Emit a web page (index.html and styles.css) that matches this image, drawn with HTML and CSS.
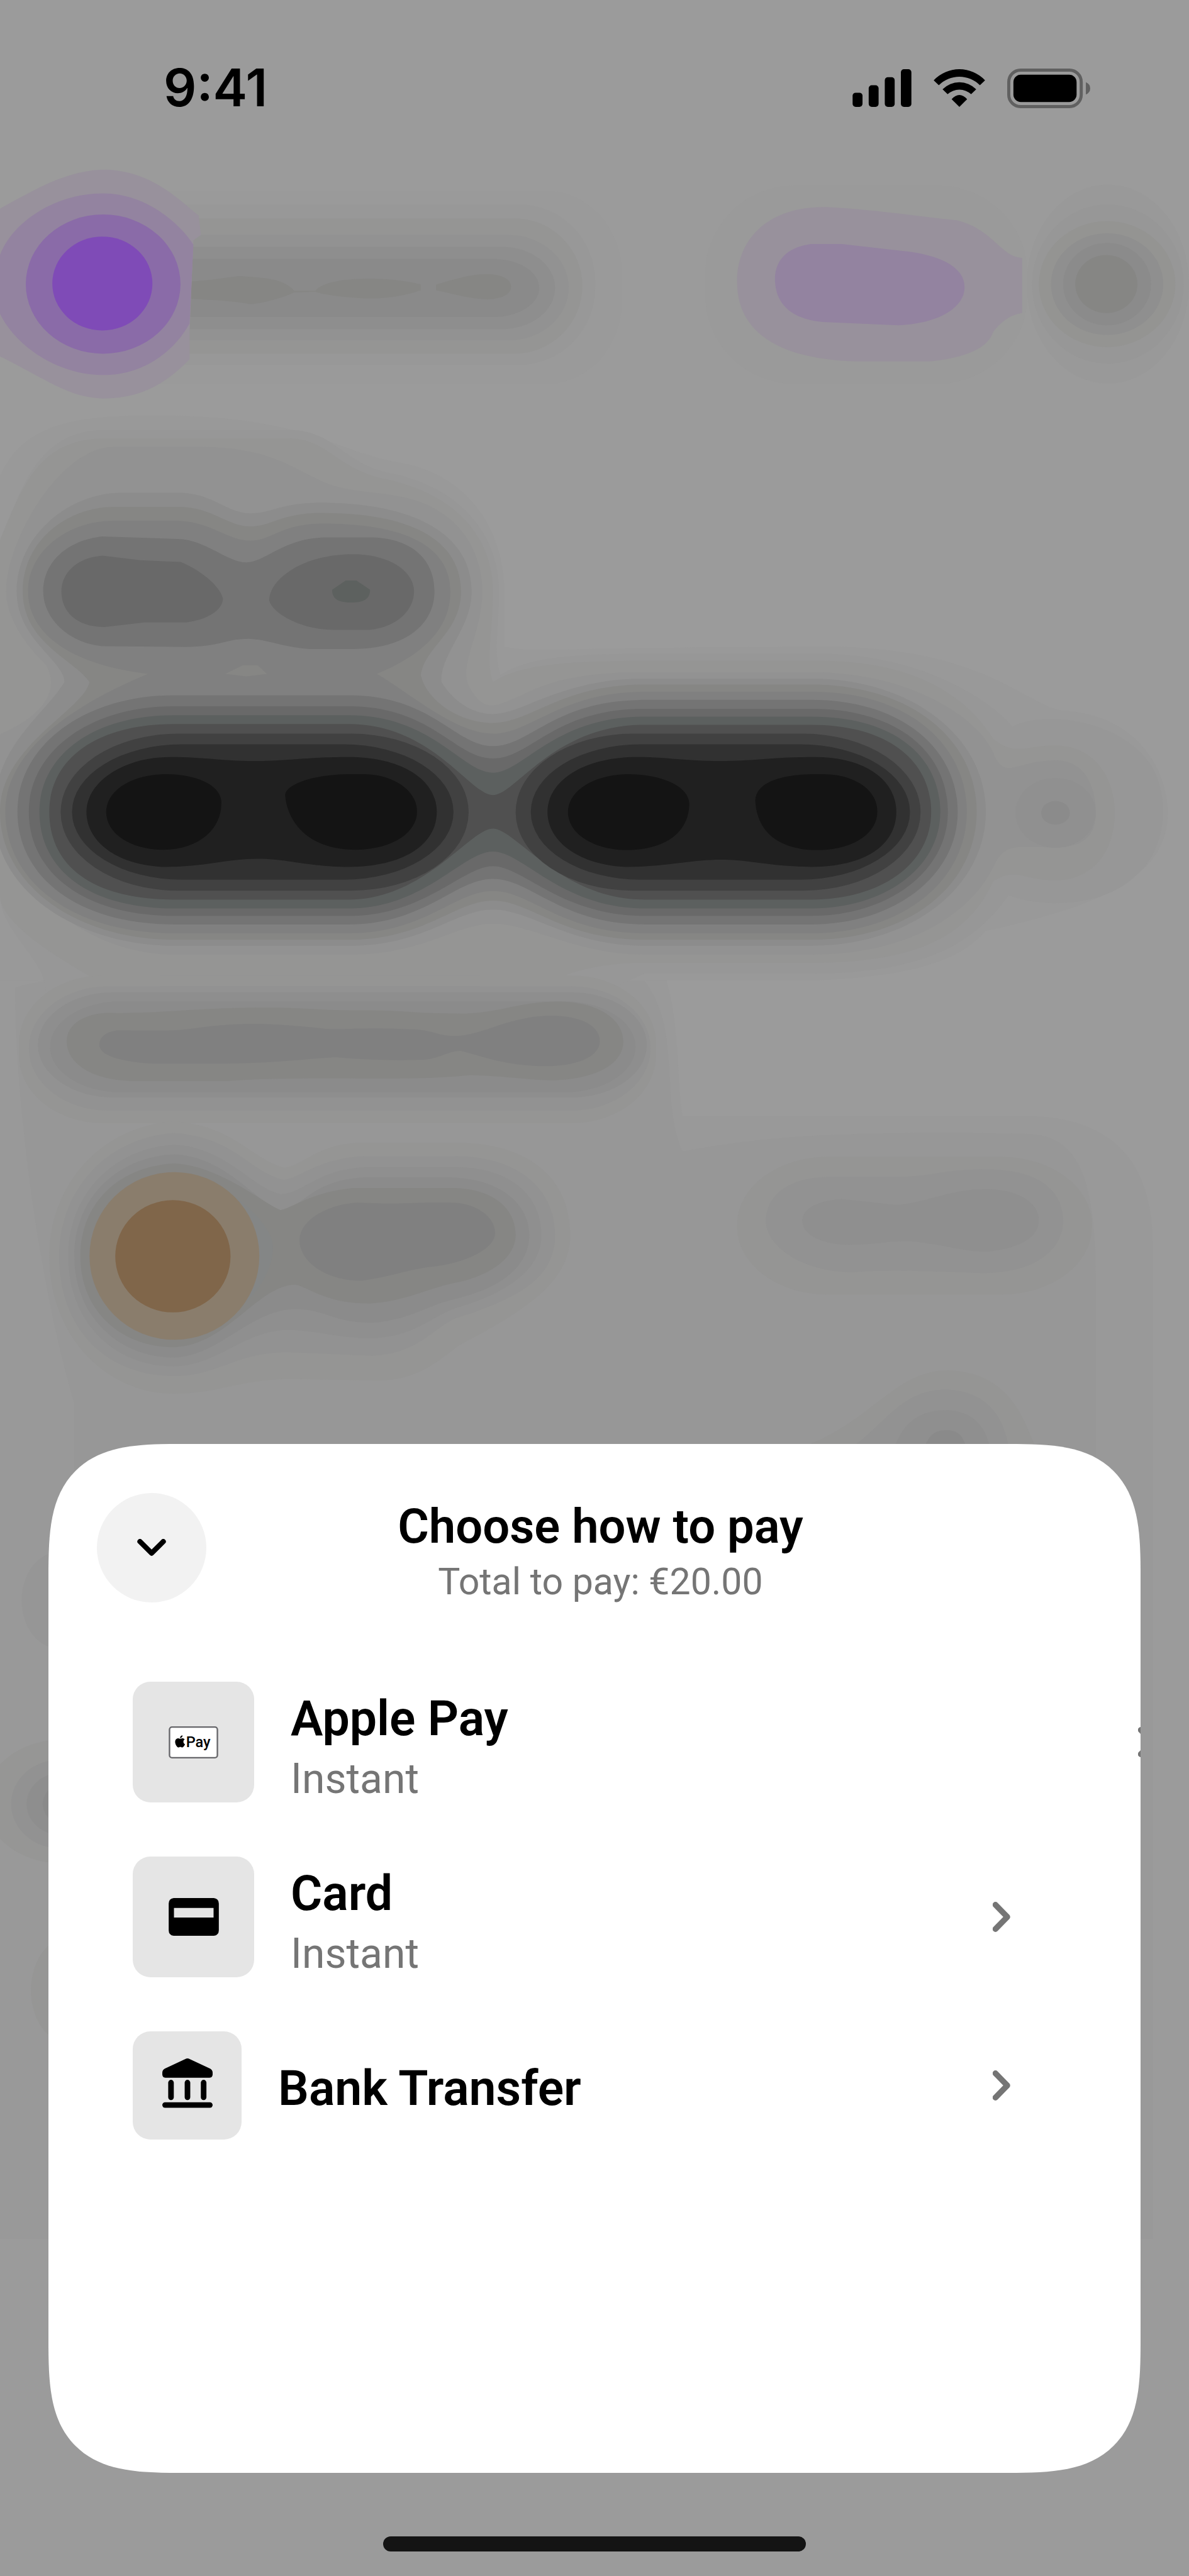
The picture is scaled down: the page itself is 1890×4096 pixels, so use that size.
FILE: index.html
```html
<!DOCTYPE html>
<html lang="en">
<head>
    <meta charset="UTF-8">
    <meta name="viewport" content="width=device-width, initial-scale=1.0">
    <title>Choose how to pay</title>
    <link rel="stylesheet" href="styles.css">
</head>
<body>
    <!-- Dimmed account screen behind the sheet -->
    <svg class="backdrop" viewBox="0 0 1920 4162" preserveAspectRatio="xMidYMin slice" aria-hidden="true">
        <!-- Top bar -->
        <g transform="scale(1.2245 .4464)">
            <rect x="100" y="690" width="720" height="700" rx="100" ry="300" fill="#9a9a9a"/>
            <rect x="100" y="740" width="685" height="580" rx="100" ry="280" fill="#989898"/>
            <rect x="100" y="790" width="668" height="490" rx="90" ry="245" fill="#959594"/>
            <rect x="100" y="850" width="650" height="382" rx="80" ry="191" fill="#929292"/>
            <rect x="100" y="893" width="632" height="298" rx="70" ry="149" fill="#8e8e8e"/>
            <rect x="100" y="937" width="611" height="210" rx="60" ry="105" fill="#8a8a8a"/>
            <path fill="#868684" d="M240 1020C290 1015 310 995 322 1000C350 1005 375 1010 388 1052H416C425 1020 455 1008 490 1008C520 1010 545 1020 555 1030V1050C545 1060 520 1080 488 1080C455 1078 425 1065 416 1056L388 1058C370 1080 350 1095 330 1101C310 1090 280 1085 240 1080Z"/>
            <path fill="#868684" d="M575 1030C600 1010 620 992 642 992C662 992 674 1010 674 1038C674 1065 662 1083 642 1083C615 1080 595 1060 575 1050Z"/>
            <path fill="#98919c" d="M0 755C50 680 90 614 140 614C200 620 235 720 262 780L265 850L255 870L250 1200V1300C215 1400 180 1442 136 1442C90 1440 60 1370 0 1290Z"/>
            <path fill="#9383a0" d="M0 923C15 810 70 700 136 700C190 700 235 800 255 885L250 1170C230 1270 190 1357 136 1357C75 1357 20 1250 0 1135Z"/>
            <ellipse cx="136" cy="1028" rx="102" ry="252" fill="#8a6ba8"/>
            <ellipse cx="135" cy="1026" rx="66" ry="170" fill="#7f4bb7"/>
            <rect x="930" y="670" width="425" height="720" rx="120" ry="320" fill="#9a9a9a"/>
            <path fill="#98919c" d="M1095 750C1020 740 972 850 972 1020C972 1190 1020 1300 1130 1308H1225C1290 1290 1305 1240 1310 1200C1325 1150 1335 1140 1348 1132V933C1320 930 1310 830 1262 797C1230 790 1160 760 1095 750Z"/>
            <path fill="#9383a0" d="M1070 883C1035 895 1022 950 1022 1010C1022 1090 1040 1155 1085 1165L1185 1177C1240 1170 1272 1110 1272 1040C1272 960 1235 920 1190 908L1110 883Z"/>
            <ellipse cx="1461" cy="1028" rx="107" ry="360" fill="#999"/>
            <ellipse cx="1461" cy="1028" rx="100" ry="288" fill="#979797"/>
            <ellipse cx="1460" cy="1028" rx="90" ry="228" fill="#949492"/>
            <ellipse cx="1460" cy="1028" rx="74" ry="184" fill="#8f8f8f"/>
            <ellipse cx="1460" cy="1028" rx="58" ry="149" fill="#8b8b8b"/>
            <ellipse cx="1459" cy="1028" rx="41" ry="105" fill="#868684"/>
        </g>

        <!-- Transaction list card -->
        <g transform="translate(0 1550) scale(1.2245 .574)">
            <path fill="#999" d="M0 -60H850C900 60 890 300 900 440H1350C1480 440 1520 600 1520 800V3600H0Z"/>
            <path fill="#979797" d="M20 80C80 20 800 -60 850 60C900 200 870 400 900 540C1000 500 1100 480 1350 490C1420 490 1445 600 1445 900V3300H98V1250C50 900 20 400 20 80Z"/>
        </g>

        <!-- Account name and balance -->
        <g transform="translate(0 700) scale(1.2245 .574)">
            <path fill="#999" d="M0 120C30 -20 90 -50 200 -50C400 -50 430 40 520 80C620 110 665 280 665 445V600C700 620 760 600 1100 600C1300 610 1350 760 1400 780C1500 790 1540 950 1540 1068C1540 1250 1450 1330 1300 1400C1260 1500 1180 1530 1070 1540H0Z"/>
            <path fill="#979797" d="M0 300C30 150 50 -10 140 -10H380C440 -10 450 80 510 110C610 150 658 290 658 445C658 560 650 610 660 680C690 640 730 620 850 620H1080C1220 620 1310 760 1335 825C1380 780 1460 810 1500 890C1550 980 1540 1170 1500 1240C1460 1330 1380 1340 1330 1300C1290 1420 1230 1520 1070 1520H850L800 1568H60C60 1480 0 1400 0 1300Z"/>
            <path fill="#959594" d="M0 300C30 150 50 14 140 14H380C430 14 440 90 500 125C600 165 650 290 650 445C650 560 640 640 650 700C680 660 720 640 850 640H1080C1220 640 1280 760 1310 860C1340 910 1350 878 1392 878C1440 878 1470 960 1470 1068C1470 1180 1440 1258 1392 1258C1350 1258 1340 1220 1310 1260C1280 1400 1220 1490 1070 1490H850C800 1490 760 1510 740 1530H120C80 1480 0 1380 0 1300Z"/>
            <path fill="#929292" d="M8 445C8 300 80 38 150 38H260C350 38 380 90 420 130C450 165 500 165 520 175C600 200 636 320 636 445C636 560 605 650 618 710C640 800 660 760 690 735C730 690 780 672 850 672H1070C1200 672 1290 800 1310 900C1325 980 1340 920 1392 920C1430 920 1445 990 1445 1068C1445 1130 1430 1165 1392 1165C1340 1165 1325 1150 1310 1220C1280 1350 1200 1467 1070 1467H850C760 1467 700 1380 650 1380C600 1380 560 1467 460 1467H230C120 1467 20 1300 -15 1065V860C60 800 80 720 60 650C30 590 8 510 8 445Z"/>
            <path fill="#8c8c8c" d="M22 445C22 290 90 167 160 167H235C280 167 300 225 330 225C360 225 370 193 430 195C560 200 622 300 622 445C622 550 580 620 582 700C600 760 625 790 650 790C690 790 740 690 850 690H1070C1200 690 1300 850 1300 1065C1300 1280 1200 1442 1070 1442H850C750 1442 700 1340 650 1340C600 1340 560 1442 460 1442H230C110 1442 -8 1300 -8 1065C-8 880 60 790 85 700C85 640 22 580 22 445Z"/>
            <path fill="#868684" d="M30 445C30 300 90 207 150 207H235C280 207 300 262 330 262C360 262 370 222 430 224C550 226 608 310 608 445C608 560 560 600 555 680C560 740 600 815 650 815C700 815 740 707 850 707H1070C1200 707 1288 860 1288 1065C1288 1270 1200 1425 1070 1425H850C740 1425 700 1315 650 1315C600 1315 560 1425 460 1425H230C100 1425 0 1270 0 1065C0 880 110 780 118 700C100 640 30 590 30 445Z"/>
            <path fill="#808080" d="M37 445C37 330 90 246 150 246H235C280 250 300 302 330 302C360 302 370 252 430 254C545 256 594 330 594 445C594 560 550 630 497 677C540 730 600 845 650 845C700 845 740 727 850 727H1070C1200 727 1275 880 1275 1065C1275 1260 1190 1407 1070 1407H850C740 1407 700 1288 650 1288C600 1288 560 1407 460 1407H230C95 1407 7 1260 7 1065C7 900 90 770 195 677C90 650 37 560 37 445Z"/>
            <path fill="#868684" d="M297 677L320 653H340L352 677L325 684Z"/>
            <path fill="#747474" d="M135 290C90 300 57 360 57 445C57 520 90 590 135 599L245 601C290 600 300 578 327 578C350 578 380 607 415 607H467C540 605 573 530 573 445C573 350 540 293 487 293H430C375 293 350 363 325 363C300 363 270 298 235 297Z"/>
            <path fill="#696969" d="M135 344C100 350 81 395 81 445C81 500 100 545 138 545L190 532H245C275 525 294 495 294 465C290 430 265 385 238 362L185 357Z"/>
            <path fill="#696969" d="M465 340C400 340 355 410 355 470C360 510 400 553 440 553H487C525 545 546 495 546 445C546 390 515 340 465 340Z"/>
            <path fill="#5d615f" d="M456 414H470L488 440C488 465 480 476 463 476C445 475 438 465 438 440Z"/>
            <path fill="#747474" d="M23 1065C23 880 110 737 230 737H460C570 737 600 880 650 880C700 880 730 750 850 750H1070C1190 750 1263 890 1263 1065C1263 1245 1180 1382 1070 1382H850C740 1382 700 1254 650 1254C600 1254 560 1382 460 1382H230C100 1382 23 1245 23 1065Z"/>
            <path fill="#696969" d="M38 1065C38 900 115 768 230 768H460C570 768 600 915 650 915C700 915 730 775 850 775H1070C1185 775 1250 900 1250 1065C1250 1235 1170 1358 1070 1358H850C740 1358 690 1218 650 1218C610 1218 560 1358 460 1358H230C110 1358 38 1235 38 1065Z"/>
            <path fill="#5c605f" d="M52 1065C52 910 120 793 230 793H460C570 793 610 955 650 955C690 955 730 797 850 797H1070C1180 797 1240 910 1240 1065C1240 1225 1165 1337 1070 1337H850C740 1337 690 1177 650 1177C610 1177 560 1337 460 1337H230C115 1337 52 1225 52 1065Z"/>
            <path fill="#505050" d="M65 1065C65 920 125 818 230 818H460C570 818 620 1018 650 1018C680 1018 730 820 850 820H1070C1170 820 1228 920 1228 1065C1228 1215 1160 1312 1070 1312H850C740 1312 680 1112 650 1112C620 1112 560 1312 460 1312H230C120 1312 65 1215 65 1065Z"/>
            <g fill="#414141">
                <rect x="80" y="845" width="538" height="442" rx="155" ry="221"/>
                <rect x="680" y="845" width="534" height="442" rx="155" ry="221"/>
            </g>
            <g fill="#313131">
                <rect x="95" y="875" width="503" height="381" rx="145" ry="190"/>
                <rect x="700" y="875" width="500" height="381" rx="145" ry="190"/>
            </g>
            <g fill="#202020">
                <path d="M114 1065C114 985 160 911 225 911C270 911 290 922 335 922C380 922 400 911 460 911C530 911 576 975 576 1065C576 1160 530 1220 460 1220C400 1218 380 1197 340 1197C300 1197 270 1220 215 1220C155 1215 114 1150 114 1065Z"/>
                <path d="M722 1065C722 985 765 911 840 911C880 911 900 922 950 922C1000 922 1010 911 1075 911C1140 911 1182 975 1182 1065C1182 1160 1140 1220 1070 1220C1010 1218 990 1200 950 1200C910 1200 880 1220 825 1220C765 1215 722 1150 722 1065Z"/>
            </g>
            <g fill="#141414">
                <path d="M220 959C170 959 140 1010 140 1065C140 1130 175 1172 215 1172C265 1170 292 1110 292 1040C292 990 260 960 220 959Z"/>
                <path d="M460 959C410 960 376 990 376 1018C378 1080 400 1172 470 1172C520 1170 550 1120 550 1065C550 1000 515 959 480 959Z"/>
                <path d="M828 959C780 960 749 1010 749 1065C749 1130 785 1173 828 1173C880 1170 908 1120 909 1045C909 990 870 960 828 959Z"/>
                <path d="M1070 959C1020 962 996 990 996 1035C998 1110 1020 1173 1080 1173C1130 1170 1157 1120 1157 1065C1157 1000 1125 959 1085 959Z"/>
            </g>
            <ellipse cx="1392" cy="1068" rx="53" ry="98" fill="#909090"/>
            <ellipse cx="1392" cy="1068" rx="19" ry="33" fill="#8b8b8b"/>
        </g>

        <!-- Account details, first transaction -->
        <g transform="translate(0 1550) scale(1.2245 .574)">
            <rect x="25" y="45" width="840" height="415" rx="110" ry="190" fill="#959594"/>
            <rect x="38" y="75" width="820" height="350" rx="105" ry="175" fill="#929292"/>
            <rect x="50" y="92" width="803" height="296" rx="100" ry="148" fill="#8e8e8e"/>
            <rect x="66" y="117" width="772" height="257" rx="95" ry="128" fill="#8b8b8b"/>
            <path fill="#868684" d="M140 150C105 155 88 190 88 230C88 290 120 342 180 342H300C400 325 540 345 620 325C680 330 700 340 730 340C790 335 822 290 822 230C822 170 790 118 735 118C680 120 660 150 610 152C540 152 540 143 480 143C420 143 400 135 350 135C260 135 220 152 140 150Z"/>
            <path fill="#808080" d="M155 199C135 205 131 225 131 240C131 265 150 285 200 293H300C380 290 420 275 445 275C490 284 540 284 560 282C585 275 590 257 608 257C640 275 670 300 722 300C770 298 791 265 791 230C791 190 770 158 725 158C670 160 635 215 600 215C575 215 570 196 540 196C480 190 450 198 430 195C390 185 350 181 340 181C270 181 260 200 210 200Z"/>

            <path fill="#959594" d="M230 455C130 470 65 640 65 835C65 1060 140 1222 230 1222C290 1220 310 1185 380 1180L500 1185C560 1180 580 1120 610 1080C700 980 752 900 752 775C752 620 700 515 600 515H480C420 515 400 580 375 586C330 560 310 470 230 455Z"/>
            <path fill="#929292" d="M230 488C140 500 78 650 78 835C78 1040 140 1172 230 1172C290 1170 310 1105 380 1105L490 1115C550 1110 570 1040 600 1010C690 950 732 890 732 775C732 640 680 553 600 553H480C420 560 400 610 375 620C330 600 310 500 230 488Z"/>
            <path fill="#8f8f8f" d="M230 521C150 530 90 660 90 835C90 1020 150 1145 230 1145C290 1140 320 1045 380 1042C420 1045 450 1066 490 1066C550 1060 570 1000 605 978C680 930 714 860 714 775C714 660 670 584 600 584H490C420 584 400 660 370 660C330 640 300 530 230 521Z"/>
            <path fill="#8b8b8b" d="M230 548C155 555 98 670 98 835C98 1000 155 1120 230 1120C290 1115 330 985 390 983C430 985 440 1022 490 1022C540 1015 560 975 600 955C670 920 698 850 698 775C698 690 660 613 590 613H480C410 620 400 700 370 705C340 690 300 555 230 548Z"/>
            <path fill="#868684" d="M230 574C160 580 106 680 106 835C106 990 160 1091 230 1091C300 1085 340 915 390 915C410 925 430 968 487 968C540 960 560 925 610 905C655 880 680 830 680 775C680 700 650 643 595 643H465C410 655 385 700 370 705C350 690 290 580 230 574Z"/>
            <path fill="#848686" d="M290 640C330 690 360 760 360 810C360 860 345 930 320 970Z"/>
            <path fill="#808080" d="M470 684C430 690 395 735 395 790C395 850 430 904 477 904C520 890 540 870 575 863C620 850 653 810 653 770C653 720 625 684 595 684C550 682 540 690 470 684Z"/>
            <ellipse cx="230" cy="834" rx="112" ry="236" fill="#8a7d6c"/>
            <ellipse cx="228" cy="835" rx="76" ry="158" fill="#80664a"/>

            <rect x="972" y="555" width="468" height="388" rx="120" ry="190" fill="#959594"/>
            <path fill="#929292" d="M1090 612C1030 615 1010 680 1010 735C1010 810 1060 880 1125 880C1180 870 1240 880 1300 882C1370 880 1402 810 1402 735C1402 650 1370 590 1300 590C1240 590 1230 612 1180 612Z"/>
            <path fill="#8f8f8f" d="M1110 674C1070 680 1058 710 1058 735C1058 780 1090 803 1120 803C1170 800 1160 793 1200 793C1240 800 1270 822 1300 822C1345 815 1370 780 1370 735C1370 680 1340 646 1300 646C1250 646 1215 690 1180 690Z"/>
            <path fill="#959594" d="M1060 1370C1150 1300 1180 1156 1250 1156C1330 1160 1350 1290 1365 1370Z"/>
            <path fill="#929292" d="M1125 1370C1170 1300 1190 1210 1248 1210C1310 1215 1325 1310 1330 1370Z"/>
            <path fill="#8f8f8f" d="M1180 1370C1190 1310 1210 1268 1248 1268C1285 1270 1300 1320 1305 1370Z"/>
            <path fill="#8a8a8a" d="M1220 1370C1225 1335 1235 1324 1248 1324C1262 1324 1268 1335 1274 1370Z"/>
        </g>

        <!-- Transactions showing beside the sheet -->
        <ellipse cx="95" cy="2585" rx="60" ry="78" fill="#969696"/>
        <ellipse cx="100" cy="2910" rx="125" ry="100" fill="#969695"/>
        <ellipse cx="98" cy="2914" rx="80" ry="72" fill="#929292"/>
        <ellipse cx="98" cy="2914" rx="55" ry="50" fill="#8e8e8e"/>
        <ellipse cx="98" cy="2914" rx="29" ry="30" fill="#8a8a8a"/>
        <ellipse cx="110" cy="3215" rx="60" ry="85" fill="#969695"/>
    </svg>

    <div class="screen">
        <header class="status-bar">
            <span class="time">9:41</span>
            <div class="status-icons">
                <svg width="94" height="60" viewBox="0 0 95 61" aria-hidden="true">
                    <rect x="0" y="38" width="16" height="23" rx="5"/>
                    <rect x="26" y="26" width="16" height="35" rx="5"/>
                    <rect x="52" y="13" width="16" height="48" rx="5"/>
                    <rect x="78" y="0" width="17" height="61" rx="5"/>
                </svg>
                <svg width="82" height="60" viewBox="0 0 83 61" aria-hidden="true">
                    <path d="M0 18A57 57 0 0 1 83 18L74.7 26A47 47 0 0 0 8.3 26Z"/>
                    <path d="M14.3 32.5A38 38 0 0 1 68.7 32.5L60.5 40.5A28 28 0 0 0 22.5 40.5Z"/>
                    <path d="M29 48.5Q41.5 35 54 48.5L41.5 61Z"/>
                </svg>
                <svg width="132" height="63" viewBox="0 0 134 64" aria-hidden="true">
                    <rect x="2.5" y="2.5" width="117" height="59" rx="19" fill="none" stroke="#606060" stroke-width="5"/>
                    <rect x="10" y="10" width="102" height="44" rx="12"/>
                    <path d="M127 22Q134 25 134 32T127 42Z" fill="#606060"/>
                </svg>
            </div>
        </header>

        <main class="sheet">
            <div class="sheet-header">
                <button type="button" class="close-btn" aria-label="Close">
                    <svg width="46" height="28" viewBox="0 0 47 29" aria-hidden="true">
                        <path d="M4.3 4.3L23.5 23.5L42.7 4.3"/>
                    </svg>
                </button>
                <div class="sheet-heading">
                    <h1>Choose how to pay</h1>
                    <p>Total to pay: €20.00</p>
                </div>
            </div>

            <div class="options">
                <button type="button" class="option option-wide">
                    <span class="tile">
                        <svg width="79" height="51" viewBox="0 0 80 52" aria-hidden="true">
                            <rect x="1.2" y="1.2" width="77.6" height="49.6" rx="4" fill="#fff" stroke="#66666a" stroke-width="2.4"/>
                            <path transform="translate(8.5 14.5) scale(.82)" d="M12.152 6.896c-.948 0-2.415-1.078-3.96-1.04-2.04.027-3.91 1.183-4.961 3.014-2.117 3.675-.546 9.103 1.519 12.09 1.013 1.454 2.208 3.09 3.792 3.039 1.52-.065 2.09-.987 3.935-.987 1.831 0 2.35.987 3.96.948 1.637-.026 2.676-1.48 3.676-2.948 1.156-1.688 1.636-3.325 1.662-3.415-.039-.013-3.182-1.221-3.22-4.857-.026-3.04 2.48-4.494 2.597-4.559-1.429-2.09-3.623-2.324-4.39-2.376-2-.156-3.675 1.09-4.61 1.09zM15.53 3.83c.843-1.012 1.4-2.427 1.245-3.83-1.207.052-2.662.805-3.532 1.818-.78.896-1.454 2.338-1.273 3.714 1.338.104 2.715-.688 3.559-1.701"/>
                            <text class="pay-mark" x="28" y="34">Pay</text>
                        </svg>
                    </span>
                    <span class="option-text">
                        <span class="option-name">Apple Pay</span>
                        <span class="option-note">Instant</span>
                    </span>
                    <svg class="chevron" width="28" height="48" viewBox="0 0 29 49" aria-hidden="true">
                        <path d="M4.5 4.5L24 24.5L4.5 44.5"/>
                    </svg>
                </button>

                <button type="button" class="option">
                    <span class="tile">
                        <svg width="80" height="60" viewBox="0 0 81 61" aria-hidden="true">
                            <path fill-rule="evenodd" d="M8 0H73Q81 1 81 9V52Q81 60 73 61H8Q0 60 0 52V9Q0 1 8 0ZM8.5 16V31.5H72.5V16Z"/>
                        </svg>
                    </span>
                    <span class="option-text">
                        <span class="option-name">Card</span>
                        <span class="option-note">Instant</span>
                    </span>
                    <svg class="chevron" width="28" height="48" viewBox="0 0 29 49" aria-hidden="true">
                        <path d="M4.5 4.5L24 24.5L4.5 44.5"/>
                    </svg>
                </button>

                <button type="button" class="option option-single">
                    <span class="tile tile-small">
                        <svg width="80" height="86" viewBox="0 0 81 87" aria-hidden="true">
                            <path d="M37 1Q40.5 -1 44 1L77 16.5Q81 19 81 23V26Q80.5 31 76 31H5Q.5 31 0 26V23Q0 19 4 16.5Z"/>
                            <rect x="9.5" y="34.5" width="9" height="32.5" rx="4.5"/>
                            <rect x="36" y="34.5" width="9" height="32.5" rx="4.5"/>
                            <rect x="62" y="34.5" width="9" height="32.5" rx="4.5"/>
                            <rect x="0" y="70.5" width="81" height="9" rx="4.5"/>
                        </svg>
                    </span>
                    <span class="option-text">
                        <span class="option-name">Bank Transfer</span>
                    </span>
                    <svg class="chevron" width="28" height="48" viewBox="0 0 29 49" aria-hidden="true">
                        <path d="M4.5 4.5L24 24.5L4.5 44.5"/>
                    </svg>
                </button>
            </div>
        </main>

        <div class="home-indicator"></div>
    </div>
</body>
</html>
```

FILE: styles.css
```css
* {
    box-sizing: border-box;
}
body {
    margin: 0;
    background-color: #9b9b9b;
    color: #000;
    font-family: Roboto, "Liberation Sans", Arial, sans-serif;
    position: relative;
}
.backdrop {
    position: absolute;
    top: 0;
    left: 0;
    width: 100%;
    height: 100%;
}
.screen {
    position: relative;
    min-height: 100vh;
    display: flex;
    flex-direction: column;
}

/* Status bar */
.status-bar {
    display: flex;
    align-items: center;
    justify-content: space-between;
    height: 280px;
    padding: 0 157px 0 260px;
}
.time {
    font-family: Inter, "Liberation Sans", sans-serif;
    font-size: 82px;
    font-weight: 600;
    line-height: 96px;
}
.status-icons {
    display: flex;
    align-items: center;
    gap: 35px;
}

/* Bottom sheet */
.sheet {
    margin: auto 77px 101px;
    padding: 78px 0 530px;
    background-color: #fff;
    border-radius: 145px;
    overflow: hidden;
}
@supports (corner-shape: superellipse(1.6)) {
    .sheet {
        border-radius: 210px;
        corner-shape: superellipse(1.6);
    }
}
.sheet-header {
    display: grid;
    grid-template-columns: 174px 1fr 174px;
    padding: 0 58px 0 77px;
}
.close-btn {
    display: flex;
    align-items: center;
    justify-content: center;
    width: 174px;
    height: 174px;
    padding: 0;
    border: none;
    border-radius: 50%;
    background-color: #f2f2f2;
    cursor: pointer;
}
.close-btn path {
    fill: none;
    stroke: #000;
    stroke-width: 8.5;
    stroke-linecap: round;
    stroke-linejoin: round;
}
.sheet-heading {
    text-align: center;
}
.sheet-heading h1 {
    margin: 0;
    font-size: 76px;
    font-weight: 600;
    line-height: 106px;
}
.sheet-heading p {
    margin: 0;
    color: #757575;
    font-size: 59px;
    line-height: 70px;
}

/* Payment options */
.options {
    display: flex;
    flex-direction: column;
    gap: 86px;
    margin-top: 124px;
    padding: 0 207px 0 134px;
}
.option {
    display: flex;
    align-items: center;
    gap: 58px;
    padding: 0;
    border: none;
    background: none;
    color: inherit;
    font-family: inherit;
    text-align: left;
    cursor: pointer;
}
.option-wide {
    margin-right: -231px;
}
.tile {
    display: flex;
    align-items: center;
    justify-content: center;
    flex: none;
    width: 193px;
    height: 192px;
    border-radius: 28px;
    background-color: #e5e5e5;
}
.tile-small {
    width: 173px;
    height: 172px;
}
.pay-mark {
    font-size: 24px;
    font-weight: 500;
}
.option-text {
    flex: 1;
}
.option-name,
.option-note {
    display: block;
}
.option-name {
    font-size: 77px;
    font-weight: 600;
    line-height: 118px;
}
.option-note {
    color: #757575;
    font-size: 66px;
    line-height: 74px;
}
.option-single .option-text {
    padding-top: 10px;
}
.chevron {
    flex: none;
}
.chevron path {
    fill: none;
    stroke: #757575;
    stroke-width: 9.5;
    stroke-linecap: round;
    stroke-linejoin: round;
}

.home-indicator {
    width: 672px;
    height: 24px;
    margin: 0 auto 39px;
    border-radius: 12px;
    background-color: #141414;
}
```
